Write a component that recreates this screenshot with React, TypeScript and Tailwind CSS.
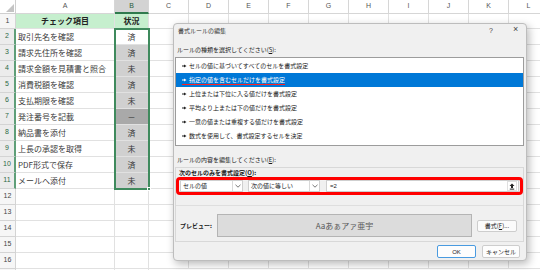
import React from "react";

const JP = "font-['Noto_Sans_CJK_JP','Noto_Sans',sans-serif]";

const data: [string, string, "w" | "g" | "d"][] = [
  ["取引先名を確認", "済", "w"],
  ["請求先住所を確認", "済", "g"],
  ["請求金額を見積書と照合", "未", "g"],
  ["消費税額を確認", "済", "g"],
  ["支払期限を確認", "未", "g"],
  ["発注番号を記載", "－", "d"],
  ["納品書を添付", "済", "g"],
  ["上長の承認を取得", "未", "g"],
  ["PDF形式で保存", "済", "g"],
  ["メールへ添付", "未", "g"],
];

const rest = ["C", "D", "E", "F", "G", "H", "I", "J", "K", "L"];

function RestCells() {
  return (
    <>
      {rest.map((c) => (
        <div key={c} className="w-[40px] shrink-0 h-full border-r border-b border-[#e1e1e1]" />
      ))}
    </>
  );
}

function Arrow({ white }: { white?: boolean }) {
  return (
    <svg width="5" height="4" viewBox="0 0 5 4" className="shrink-0">
      <path d="M0 1.5h2V0.5L4.5 2 2 3.5V2.5H0z" fill={white ? "#fff" : "#222"} />
    </svg>
  );
}

function Chevron() {
  return (
    <svg width="6" height="4" viewBox="0 0 6 4">
      <path d="M0.5 0.8L3 3.2 5.5 0.8" stroke="#555" strokeWidth="0.8" fill="none" />
    </svg>
  );
}

const items = [
  "セルの値に基づいてすべてのセルを書式設定",
  "指定の値を含むセルだけを書式設定",
  "上位または下位に入る値だけを書式設定",
  "平均より上または下の値だけを書式設定",
  "一意の値または重複する値だけを書式設定",
  "数式を使用して、書式設定するセルを決定",
];

export default function App() {
  return (
    <div className={`relative w-[540px] h-[270px] overflow-hidden bg-white ${JP} text-[#3a3a3a]`}>
      {/* Sheet */}
      <div className="flex flex-col">
        {/* column header */}
        <div className="flex h-[14px] shrink-0 bg-white">
          <div className="w-[16px] shrink-0 h-full border-r border-b border-[#cfcfcf] flex items-end justify-end p-[1px]">
            <svg width="8" height="8" viewBox="0 0 8 8">
              <path d="M8 0V8H0z" fill="#c4c4c4" />
            </svg>
          </div>
          <div className="w-[99px] shrink-0 h-full border-r border-b border-[#d6d6d6] flex items-center justify-center text-[7px] text-[#555] font-['Liberation_Sans',sans-serif]">A</div>
          <div className="w-[34px] shrink-0 h-full border-r border-b-2 border-b-[#2f7a4d] border-r-[#d6d6d6] bg-[#d3d3d3] flex items-center justify-center text-[7px] text-[#2a5d3d] font-['Liberation_Sans',sans-serif]">B</div>
          {rest.map((c) => (
            <div key={c} className="w-[40px] shrink-0 h-full border-r border-b border-[#d6d6d6] flex items-center justify-center text-[7px] text-[#555] font-['Liberation_Sans',sans-serif]">{c}</div>
          ))}
        </div>
        {/* row 1 */}
        <div className="flex h-[15px] shrink-0">
          <div className="w-[16px] shrink-0 h-full border-r border-b border-[#d4d4d4] bg-[#f6f6f6] flex items-center justify-center text-[7px] text-[#444] font-['Liberation_Sans',sans-serif]">1</div>
          <div className="w-[99px] shrink-0 h-full border-r border-b border-[#e1e1e1] bg-[#c6efce] flex items-center justify-center text-[8px] font-bold text-[#222]">チェック項目</div>
          <div className="w-[34px] shrink-0 h-full border-r border-b border-[#e1e1e1] bg-[#c6efce] flex items-center justify-center text-[8px] font-bold text-[#222]">状況</div>
          <RestCells />
        </div>
        {data.map(([a, b, k], i) => (
          <div key={i} className="flex h-[16px] shrink-0">
            <div className="w-[16px] shrink-0 h-full border-r-2 border-r-[#5f9f78] border-b border-b-[#d4d4d4] bg-[#ececec] flex items-center justify-center text-[7px] text-[#2d6a46] font-['Liberation_Sans',sans-serif]">{i + 2}</div>
            <div className="w-[99px] shrink-0 h-full border-r border-b border-[#e1e1e1] flex items-center pl-[2px] text-[8px] whitespace-nowrap">{a}</div>
            <div
              className={`w-[34px] shrink-0 h-full border-r border-b border-[#e1e1e1] flex items-center justify-center text-[8px] ${
                k === "w" ? "bg-white" : k === "g" ? "bg-[#d0d0d0]" : "bg-[#a9a9a9]"
              }`}
            >
              {b}
            </div>
            <RestCells />
          </div>
        ))}
        {[12, 13, 14, 15, 16].map((n) => (
          <div key={n} className="flex h-[16px] shrink-0">
            <div className="w-[16px] shrink-0 h-full border-r border-b border-[#d4d4d4] bg-[#f6f6f6] flex items-center justify-center text-[7px] text-[#444] font-['Liberation_Sans',sans-serif]">{n}</div>
            <div className="w-[99px] shrink-0 h-full border-r border-b border-[#e1e1e1]" />
            <div className="w-[34px] shrink-0 h-full border-r border-b border-[#e1e1e1]" />
            <RestCells />
          </div>
        ))}
        <div className="flex h-[16px] shrink-0">
          <div className="w-[16px] shrink-0 h-full border-r border-[#d4d4d4] bg-[#f6f6f6]" />
          <div className="w-[99px] shrink-0 h-full border-r border-[#e1e1e1]" />
          <div className="w-[34px] shrink-0 h-full border-r border-[#e1e1e1]" />
        </div>
      </div>

      {/* selection */}
      <div className="absolute left-[114px] top-[28px] w-[36px] h-[162px] border-2 border-[#3f8a5d] pointer-events-none" />
      <div className="absolute left-[147px] top-[187px] w-[4px] h-[4px] bg-[#3f8a5d] border border-white" />

      {/* Dialog */}
      <div className="absolute left-[173px] top-[23px] w-[354px] h-[238px] bg-[#f0f0f0] border border-[#bdbdbd] rounded-[4px] shadow-[2px_3px_8px_rgba(0,0,0,0.28)] flex flex-col pl-[1px] pr-[2px] text-[6px] leading-none text-[#1a1a1a]">
        {/* title */}
        <div className="h-[13px] flex items-center pl-[3px] relative">
          <span className="text-[#333]">書式ルールの編集</span>
          <span className="absolute left-[314px] top-[3px] text-[7px] text-[#444] font-['Liberation_Sans',sans-serif]">?</span>
          <span className="absolute left-[338px] top-[1px] text-[9px] text-[#444] font-['Liberation_Sans',sans-serif]">×</span>
        </div>
        <div className="h-[20px] pt-[6px] flex items-center pl-[2px]">
          ルールの種類を選択してください(<span className="underline">S</span>):
        </div>
        {/* list */}
        <div className="h-[89px] bg-white border border-[#9c9c9c] pt-[1px] flex flex-col">
          {items.map((t, i) => (
            <div
              key={i}
              className={`h-[14px] shrink-0 flex items-center pl-[6px] ${i === 1 ? "bg-[#0078d7] text-white" : ""}`}
            >
              {i === 1 ? (
                <span className="flex items-center gap-[2px] border-b border-[#ff2020] pb-[1px] pt-[2px]">
                  <Arrow white />
                  <span>{t}</span>
                </span>
              ) : (
                <span className="flex items-center gap-[2px]">
                  <Arrow />
                  <span>{t}</span>
                </span>
              )}
            </div>
          ))}
        </div>
        <div className="h-[21px] pt-[7px] flex items-center pl-[2px]">
          ルールの内容を編集してください(<span className="underline">E</span>):
        </div>
        {/* panel */}
        <div className="h-[75px] border border-[#d8d8d8] flex flex-col">
          <div className="h-[9px] flex items-center pl-[3px] font-bold">
            次のセルのみを書式設定(<span className="underline">O</span>):
          </div>
          <div className="h-[18px] border-[3px] border-[#ff0000] rounded-[4px] flex items-center gap-[5px] pl-[1px] pr-[1px]">
            <div className="w-[63px] h-[12px] bg-white border border-[#cfcfcf] flex items-center">
              <span className="flex-1 pl-[2px]">セルの値</span>
              <span className="w-[10px] h-full border-l border-[#d9d9d9] flex items-center justify-center">
                <Chevron />
              </span>
            </div>
            <div className="w-[72px] h-[12px] bg-white border border-[#cfcfcf] flex items-center">
              <span className="flex-1 pl-[2px]">次の値に等しい</span>
              <span className="w-[10px] h-full border-l border-[#d9d9d9] flex items-center justify-center">
                <Chevron />
              </span>
            </div>
            <div className="ml-[1px] flex-1 h-[12px] bg-white border border-[#cfcfcf] flex items-center">
              <span className="flex-1 pl-[3px] font-['Liberation_Sans',sans-serif]">=2</span>
              <span className="w-[10px] h-[10px] mr-[1px] border border-[#e0e0e0] flex items-center justify-center">
                <svg width="6" height="7" viewBox="0 0 6 7">
                  <path d="M3 0.5L5.5 3H4V5H2V3H0.5z" fill="#222" />
                  <rect x="0.8" y="5.6" width="4.4" height="1" fill="#222" />
                </svg>
              </span>
            </div>
          </div>
          <div className="h-[11px] border-b border-[#dedede]" />
          <div className="flex-1 flex items-start pt-[8px] pl-[4px] pr-[6px]">
            <div className="w-[37px] h-[23px] flex items-center font-bold">プレビュー:</div>
            <div className="w-[255px] h-[23px] bg-[#dcdcdc] border border-[#b4b4b4] flex items-center justify-center text-[8px] text-[#555]">
              Aaあぁアァ亜宇
            </div>
            <div className="ml-[5px] mt-[6px] w-[40px] h-[12px] bg-[#fbfbfb] border border-[#cdcdcd] rounded-[2px] flex items-center justify-center">
              書式(<span className="underline">F</span>)...
            </div>
          </div>
        </div>
        {/* buttons */}
        <div className="flex-1 flex items-start justify-end gap-[6px] pt-[3px] pr-[4px]">
          <div className="w-[39px] h-[13px] bg-[#fdfdfd] border border-[#4a9be0] rounded-[2px] flex items-center justify-center font-['Liberation_Sans',sans-serif]">OK</div>
          <div className="w-[38px] h-[13px] bg-[#fdfdfd] border border-[#cdcdcd] rounded-[2px] flex items-center justify-center">キャンセル</div>
        </div>
      </div>
    </div>
  );
}
